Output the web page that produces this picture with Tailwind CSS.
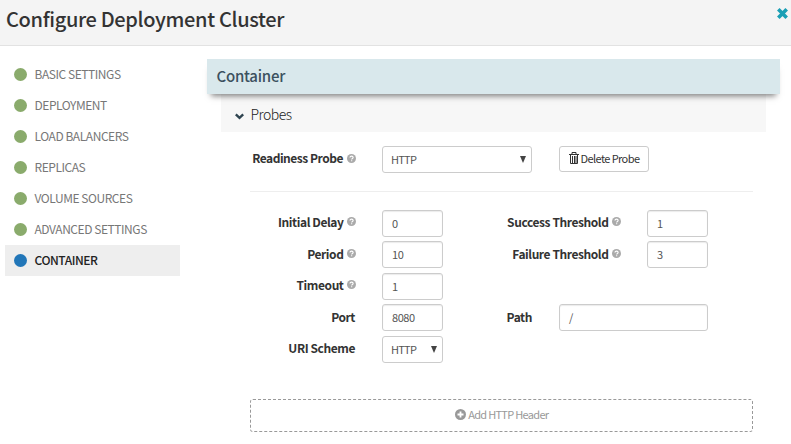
<!DOCTYPE html>
<html lang="en">
<head>
<meta charset="utf-8">
<title>Configure Deployment Cluster</title>
<script src="https://cdn.jsdelivr.net/npm/@tailwindcss/browser@4"></script>
</head>
<body class="w-[791px] h-[444px] overflow-hidden bg-white font-['Noto_Sans_CJK_SC','Open_Sans',sans-serif] text-[#333]">
<svg class="hidden">
  <symbol id="help" viewBox="0 0 16 16"><circle cx="8" cy="8" r="8" fill="#aaa"/><path d="M5.3 6.2C5.3 2.9 10.9 3 10.9 6.2C10.9 8 8.3 7.8 8.3 9.8M8.3 11V13" fill="none" stroke="#fff" stroke-width="2"/></symbol>
</svg>
<header class="h-[46px] flex justify-between bg-[#f4f4f4] border-b border-[#e2e2e2] pl-[6px] pr-[3px]">
  <h1 class="text-[20px] leading-[38px] tracking-[-0.34px] font-medium whitespace-nowrap">Configure Deployment Cluster</h1>
  <svg class="w-[11px] h-[11px] mt-[8px]" viewBox="0 0 11 11"><path d="M1.3 1.3L9.7 9.7M9.7 1.3L1.3 9.7" stroke="#1a9fb5" stroke-width="3.6"/></svg>
</header>
<div class="flex pt-[13px]">
  <nav class="ml-[5px] w-[175px] shrink-0 text-[12px] leading-[29px] tracking-[-0.45px] text-[#777] whitespace-nowrap">
    <div class="h-[31px] flex items-start pl-[9px] gap-[7.5px]"><i class="mt-[9px] size-[13px] rounded-full bg-[#8aab6c]"></i><span>BASIC SETTINGS</span></div>
    <div class="h-[31px] flex items-start pl-[9px] gap-[7.5px]"><i class="mt-[9px] size-[13px] rounded-full bg-[#8aab6c]"></i><span>DEPLOYMENT</span></div>
    <div class="h-[31px] flex items-start pl-[9px] gap-[7.5px]"><i class="mt-[9px] size-[13px] rounded-full bg-[#8aab6c]"></i><span>LOAD BALANCERS</span></div>
    <div class="h-[31px] flex items-start pl-[9px] gap-[7.5px]"><i class="mt-[9px] size-[13px] rounded-full bg-[#8aab6c]"></i><span>REPLICAS</span></div>
    <div class="h-[31px] flex items-start pl-[9px] gap-[7.5px]"><i class="mt-[9px] size-[13px] rounded-full bg-[#8aab6c]"></i><span>VOLUME SOURCES</span></div>
    <div class="h-[31px] flex items-start pl-[9px] gap-[7.5px]"><i class="mt-[9px] size-[13px] rounded-full bg-[#8aab6c]"></i><span>ADVANCED SETTINGS</span></div>
    <div class="h-[31px] flex items-start pl-[9px] gap-[7.5px] bg-[#eee] text-[#222] font-medium"><i class="mt-[9px] size-[13px] rounded-full bg-[#2176b8]"></i><span>CONTAINER</span></div>
  </nav>
  <main class="ml-[27px] w-[573px]">
    <h2 class="relative h-[35px] bg-[#d9e8ec] shadow-[0_6px_6px_-4px_rgba(0,0,0,0.5)] pl-[9.5px] text-[15px] leading-[34px] tracking-[-0.25px] font-medium text-[#3c515f]">Container</h2>
    <div class="mx-[14px] h-[38px] bg-[#f7f7f7] flex items-center pl-[13.5px] gap-[7px] pt-[5px]">
      <svg class="w-[9px] h-[7px] mt-[1px]" viewBox="0 0 9 7"><path d="M.8 1.3L4.5 4.8L8.2 1.3" fill="none" stroke="#2f4450" stroke-width="2.4"/></svg>
      <span class="text-[14px] leading-[30px] -mt-[3px] tracking-[-0.5px] font-light text-[#222]">Probes</span>
    </div>
    <section class="ml-[43px] w-[503px] pt-[14px] text-[12px] tracking-[-0.42px]">
      <div class="flex h-[46px] border-b border-[#eee] items-start">
        <div class="w-[105.5px] mr-[26.5px] h-[24px] flex items-center justify-end gap-[3.5px] font-bold whitespace-nowrap tracking-[-0.47px]">Readiness Probe<svg class="size-[9px] shrink-0"><use href="#help"/></svg></div>
        <div class="w-[150px] h-[27px] border border-[#ccc] rounded-[3px] flex items-center justify-between pl-[8px] pr-[5px] text-[11px] tracking-[-0.75px] text-[#555]"><span class="-mt-[1px]">HTTP</span><svg class="w-[6px] h-[7px]" viewBox="0 0 6 7"><path d="M0 0H6L3 7Z" fill="#444"/></svg></div>
        <button class="ml-[27px] w-[90px] h-[26px] border border-[#ccc] rounded-[3px] flex items-center justify-center gap-[2px] text-[11px] tracking-[-0.6px] whitespace-nowrap"><svg class="w-[10px] h-[12px] shrink-0 -mt-[2px]" viewBox="0 0 10 12"><path d="M0 2.5H10M3 2V.5H7V2M1.5 3V11.5H8.5V3M3.5 4V11M5.5 4V11M7 4V11" fill="none" stroke="#333"/></svg><span class="-mt-[1px]">Delete Probe</span></button>
      </div>
      <div class="pt-[17.8px] grid grid-cols-[105px_61px_150px_61px] gap-x-[27px] auto-rows-[31.5px] items-start">
        <div class="h-[24px] flex items-center justify-end gap-[3px] font-bold whitespace-nowrap -mr-[0.5px]">Initial Delay<svg class="size-[9px] shrink-0"><use href="#help"/></svg></div>
        <div class="h-[27px] border border-[#ccc] rounded-[3px] shadow-[inset_0_1px_1px_rgba(0,0,0,0.08)] pl-[9px] leading-[24px] text-[11px] text-[#555]">0</div>
        <div class="h-[24px] flex items-center justify-end gap-[3px] font-bold whitespace-nowrap -mr-[0.5px]">Success Threshold<svg class="size-[9px] shrink-0"><use href="#help"/></svg></div>
        <div class="h-[27px] border border-[#ccc] rounded-[3px] shadow-[inset_0_1px_1px_rgba(0,0,0,0.08)] pl-[9px] leading-[24px] text-[11px] text-[#555]">1</div>

        <div class="h-[25px] flex items-center justify-end gap-[3px] font-bold whitespace-nowrap -mr-[0.5px]">Period<svg class="size-[9px] shrink-0"><use href="#help"/></svg></div>
        <div class="h-[27px] border border-[#ccc] rounded-[3px] shadow-[inset_0_1px_1px_rgba(0,0,0,0.08)] pl-[9px] leading-[25px] text-[11px] text-[#555]">10</div>
        <div class="h-[25px] flex items-center justify-end gap-[3px] font-bold whitespace-nowrap -mr-[0.5px]">Failure Threshold<svg class="size-[9px] shrink-0"><use href="#help"/></svg></div>
        <div class="h-[27px] border border-[#ccc] rounded-[3px] shadow-[inset_0_1px_1px_rgba(0,0,0,0.08)] pl-[9px] leading-[25px] text-[11px] text-[#555]">3</div>

        <div class="h-[24px] flex items-center justify-end gap-[3px] font-bold whitespace-nowrap -mr-[0.5px]">Timeout<svg class="size-[9px] shrink-0"><use href="#help"/></svg></div>
        <div class="h-[27px] border border-[#ccc] rounded-[3px] shadow-[inset_0_1px_1px_rgba(0,0,0,0.08)] pl-[9px] leading-[24px] text-[11px] text-[#555] col-end-3">1</div>

        <div class="col-start-1 h-[25px] flex items-center justify-end font-bold">Port</div>
        <div class="h-[27px] border border-[#ccc] rounded-[3px] shadow-[inset_0_1px_1px_rgba(0,0,0,0.08)] pl-[9px] leading-[25px] text-[11px] text-[#555]">8080</div>
        <div class="col-span-2 flex">
          <div class="w-[62px] mr-[27px] h-[25px] flex items-center justify-end font-bold">Path</div>
          <div class="w-[149px] h-[27px] border border-[#ccc] rounded-[3px] shadow-[inset_0_1px_1px_rgba(0,0,0,0.08)] pl-[9px] leading-[25px] text-[11px] text-[#555]">/</div>
        </div>

        <div class="h-[24px] flex items-center justify-end font-bold whitespace-nowrap">URI Scheme</div>
        <div class="h-[27px] border border-[#ccc] rounded-[3px] flex items-center justify-between pl-[8px] pr-[5px] text-[11px] tracking-[-0.75px] text-[#555]"><span class="-mt-[1px]">HTTP</span><svg class="w-[6px] h-[7px]" viewBox="0 0 6 7"><path d="M0 0H6L3 7Z" fill="#444"/></svg></div>
      </div>
      <button class="mt-[31.7px] w-[503px] h-[33px] border border-dashed border-[#999] rounded-[3px] flex items-center justify-center gap-[2.5px] text-[11px] tracking-[-0.7px] text-[#999]"><svg class="size-[11px] -mt-[2px]" viewBox="0 0 11 11"><circle cx="5.5" cy="5.5" r="5.5" fill="#999"/><path d="M5.5 2.5V8.5M2.5 5.5H8.5" stroke="#fff" stroke-width="1.8"/></svg><span class="-mt-[2px]">Add HTTP Header</span></button>
    </section>
  </main>
</div>
</body>
</html>
